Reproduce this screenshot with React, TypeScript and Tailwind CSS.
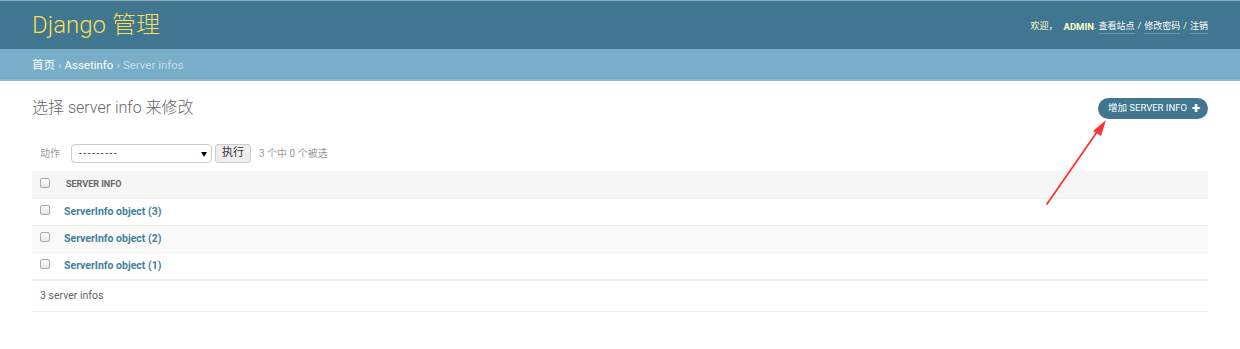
import React from "react";

const font = { fontFamily: 'Roboto, "Noto Sans CJK SC", "Liberation Sans", sans-serif' };

function Check() {
  return <span className="inline-block w-[10px] h-[10px] rounded-[2px] border border-[#a9a9a9] bg-gradient-to-b from-white to-[#e6e6e6]" />;
}

export default function App() {
  const rows = ["ServerInfo object (3)", "ServerInfo object (2)", "ServerInfo object (1)"];
  return (
    <div className="relative w-[1240px] h-[349px] bg-white overflow-hidden" style={font}>
      <div className="h-[49px] bg-[#417690] border-t border-[#8eaebf] flex items-center justify-between pl-[32px] pr-[32px]">
        <div className="text-[24px] font-light text-[#f5dd5d] leading-none">Django 管理</div>
        <div className="text-[9px] text-[#ffc] flex items-center pt-[4px]">
          <span>欢迎，</span>
          <span className="font-bold uppercase ml-[6px] text-[9.5px]">admin</span>
          <span>.&nbsp;</span>
          <span className="text-white border-b border-white/25">查看站点</span>
          <span className="mx-[3px]">/</span>
          <span className="text-white border-b border-white/25">修改密码</span>
          <span className="mx-[3px]">/</span>
          <span className="text-white border-b border-white/25">注销</span>
        </div>
      </div>
      <div className="h-[32px] bg-[#79aec8] border-b-2 border-[#8dbad0] flex items-center pl-[32px] text-[11.5px] text-[#c4dce8] pt-[3px]">
        <span className="text-white">首页</span>
        <span className="mx-[3px]">›</span>
        <span className="text-white">Assetinfo</span>
        <span className="mx-[3px]">›</span>
        <span>Server infos</span>
      </div>

      <div className="px-[32px]">
        <div className="flex items-center justify-between pt-[15px]">
          <h1 className="text-[16px] font-light text-[#666] leading-[24px]">选择 server info 来修改</h1>
          <div className="h-[21px] mt-[1px] rounded-full bg-[#417690] text-white text-[9.5px] uppercase flex items-center pl-[10px] pr-[8px]">
            增加 server info
            <span className="ml-[5px] text-[15px] font-black leading-none">+</span>
          </div>
        </div>

        <div className="flex items-center mt-[23px] h-[20px] text-[10px] text-[#999]">
          <span className="ml-[8px] mr-[11px]">动作</span>
          <div className="w-[141px] h-[19px] border border-[#ccc] rounded-[4px] flex items-center justify-between pl-[7px] pr-[4px] text-[#333]">
            <span className="tracking-[1.6px]">---------</span>
            <span className="text-[6px] text-black">▼</span>
          </div>
          <div className="ml-[3px] h-[19px] px-[6px] border border-[#ccc] rounded-[3px] bg-[#eee] text-[11px] text-[#333] flex items-center">执行</div>
          <span className="ml-[8px] text-[10px]">3 个中 0 个被选</span>
        </div>

        <div className="mt-[8px]">
          <div className="h-[27px] bg-[#f6f6f6] flex items-center">
            <span className="ml-[8px] mt-[-3px] flex"><Check /></span>
            <span className="ml-[16px] text-[9px] font-bold uppercase text-[#666]">Server info</span>
          </div>
          {rows.map((r, i) => (
            <div key={r} className={`h-[27px] flex items-center border-t border-[#eee] ${i === 1 ? "bg-[#f9f9f9]" : "bg-white"}`}>
              <span className="ml-[8px] mt-[-4px] flex"><Check /></span>
              <span className="ml-[14px] text-[10.5px] font-bold text-[#447e9b]">{r}</span>
            </div>
          ))}
          <div className="h-[33px] border-t-2 border-[#eee] border-b border-b-[#f0f0f0] flex items-center pl-[8px] text-[10.5px] text-[#666]">
            3 server infos
          </div>
        </div>
      </div>

      <svg className="absolute left-0 top-0 pointer-events-none" width="1240" height="349">
        <line x1="1047" y1="204" x2="1097" y2="132" stroke="#f33" strokeWidth="1.8" strokeLinecap="round" />
        <polygon points="1106,120 1093,131 1101,136" fill="#f33" />
      </svg>
    </div>
  );
}
